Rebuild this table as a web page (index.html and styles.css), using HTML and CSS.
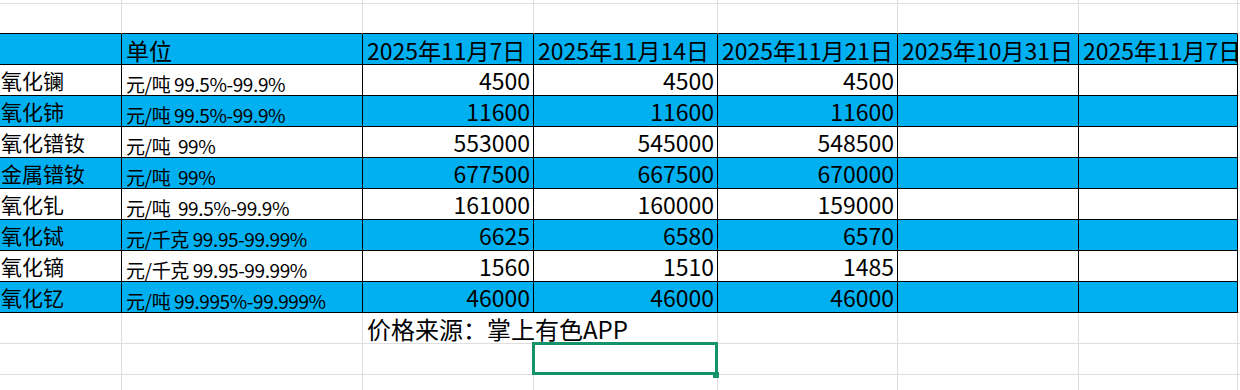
FILE: index.html
```html
<!DOCTYPE html>
<html lang="zh-CN">
<head>
<meta charset="utf-8">
<title>稀土价格</title>
<link rel="stylesheet" href="styles.css">
</head>
<body>
<div class="sheet">
  <div class="row top">
    <div class="c"></div><div class="c"></div><div class="c"></div><div class="c"></div><div class="c"></div><div class="c"></div><div class="c"></div><div class="c x"></div>
  </div>
  <div class="row above">
    <div class="c"></div><div class="c"></div><div class="c"></div><div class="c"></div><div class="c"></div><div class="c"></div><div class="c"></div><div class="c x"></div>
  </div>
  <div class="row tbl blue">
    <div class="c nm"></div>
    <div class="c hd">单位</div>
    <div class="c hd">2025年11月7日</div>
    <div class="c hd">2025年11月14日</div>
    <div class="c hd">2025年11月21日</div>
    <div class="c hd">2025年10月31日</div>
    <div class="c hd clip">2025年11月7日</div>
    <div class="c x"></div>
  </div>
  <div class="row tbl">
    <div class="c nm">氧化镧</div>
    <div class="c u">元/吨 99.5%-99.9%</div>
    <div class="c n">4500</div><div class="c n">4500</div><div class="c n">4500</div>
    <div class="c"></div><div class="c"></div><div class="c x"></div>
  </div>
  <div class="row tbl blue">
    <div class="c nm">氧化铈</div>
    <div class="c u">元/吨 99.5%-99.9%</div>
    <div class="c n">11600</div><div class="c n">11600</div><div class="c n">11600</div>
    <div class="c"></div><div class="c"></div><div class="c x"></div>
  </div>
  <div class="row tbl">
    <div class="c nm">氧化镨钕</div>
    <div class="c u">元/吨&nbsp; 99%</div>
    <div class="c n">553000</div><div class="c n">545000</div><div class="c n">548500</div>
    <div class="c"></div><div class="c"></div><div class="c x"></div>
  </div>
  <div class="row tbl blue">
    <div class="c nm">金属镨钕</div>
    <div class="c u">元/吨&nbsp; 99%</div>
    <div class="c n">677500</div><div class="c n">667500</div><div class="c n">670000</div>
    <div class="c"></div><div class="c"></div><div class="c x"></div>
  </div>
  <div class="row tbl">
    <div class="c nm">氧化钆</div>
    <div class="c u">元/吨&nbsp; 99.5%-99.9%</div>
    <div class="c n">161000</div><div class="c n">160000</div><div class="c n">159000</div>
    <div class="c"></div><div class="c"></div><div class="c x"></div>
  </div>
  <div class="row tbl blue">
    <div class="c nm">氧化铽</div>
    <div class="c u">元/千克 99.95-99.99%</div>
    <div class="c n">6625</div><div class="c n">6580</div><div class="c n">6570</div>
    <div class="c"></div><div class="c"></div><div class="c x"></div>
  </div>
  <div class="row tbl">
    <div class="c nm">氧化镝</div>
    <div class="c u">元/千克 99.95-99.99%</div>
    <div class="c n">1560</div><div class="c n">1510</div><div class="c n">1485</div>
    <div class="c"></div><div class="c"></div><div class="c x"></div>
  </div>
  <div class="row tbl blue">
    <div class="c nm">氧化钇</div>
    <div class="c u">元/吨 99.995%-99.999%</div>
    <div class="c n">46000</div><div class="c n">46000</div><div class="c n">46000</div>
    <div class="c"></div><div class="c"></div><div class="c x"></div>
  </div>
  <div class="row">
    <div class="c"></div><div class="c"></div>
    <div class="c span2 src">价格来源：掌上有色APP</div>
    <div class="c"></div><div class="c"></div><div class="c"></div><div class="c x"></div>
  </div>
  <div class="row">
    <div class="c"></div><div class="c"></div><div class="c"></div><div class="c"></div><div class="c"></div><div class="c"></div><div class="c"></div><div class="c x"></div>
  </div>
  <div class="row">
    <div class="c"></div><div class="c"></div><div class="c"></div><div class="c"></div><div class="c"></div><div class="c"></div><div class="c"></div><div class="c x"></div>
  </div>
  <div class="sel"></div>
</div>
</body>
</html>
```
FILE: styles.css
```css
* {
  box-sizing: border-box;
  margin: 0;
  padding: 0;
}

body {
  margin: 0;
  background: #ffffff;
  color: #000000;
  font-family: "Noto Sans CJK SC", "Noto Sans", sans-serif;
  overflow: hidden;
}

.sheet {
  position: relative;
  width: 1240px;
  height: 390px;
  overflow: hidden;
}

.row {
  display: grid;
  grid-template-columns: 122px 241px 171px 184px 180px 181px 159px 1fr;
  height: 31px;
}

.row.top {
  height: 3px;
}

.c {
  display: flex;
  align-items: flex-end;
  border-right: 1px solid #dedede;
  border-bottom: 1px solid #dedede;
  white-space: nowrap;
  font-size: 23px;
  line-height: 1;
  padding: 0 3px 3px 3px;
}

.clip {
  overflow: hidden;
}

.above .c:not(.x) {
  border-bottom-color: #000000;
}

.tbl .c:not(.x) {
  border-right-color: #000000;
  border-bottom-color: #000000;
}

.blue .c:not(.x) {
  background: #00b0f0;
}

.hd {
  padding-bottom: 2px;
  padding-left: 4px;
}

.nm {
  font-size: 21px;
  padding-left: 1px;
  padding-bottom: 4px;
}

.u {
  font-size: 19px;
  letter-spacing: -0.4px;
  padding-left: 4px;
  padding-bottom: 2px;
}

.n {
  justify-content: flex-end;
  padding-right: 3px;
}

.span2 {
  grid-column: span 2;
}

.src {
  font-size: 24px;
  padding-left: 4px;
  padding-bottom: 2px;
}

.sel {
  position: absolute;
  left: 532px;
  top: 342px;
  width: 186px;
  height: 33px;
  border: 3px solid #14926a;
}

.sel::after {
  content: "";
  position: absolute;
  left: 178px;
  top: 27px;
  width: 6px;
  height: 6px;
  background: #14926a;
}
```
